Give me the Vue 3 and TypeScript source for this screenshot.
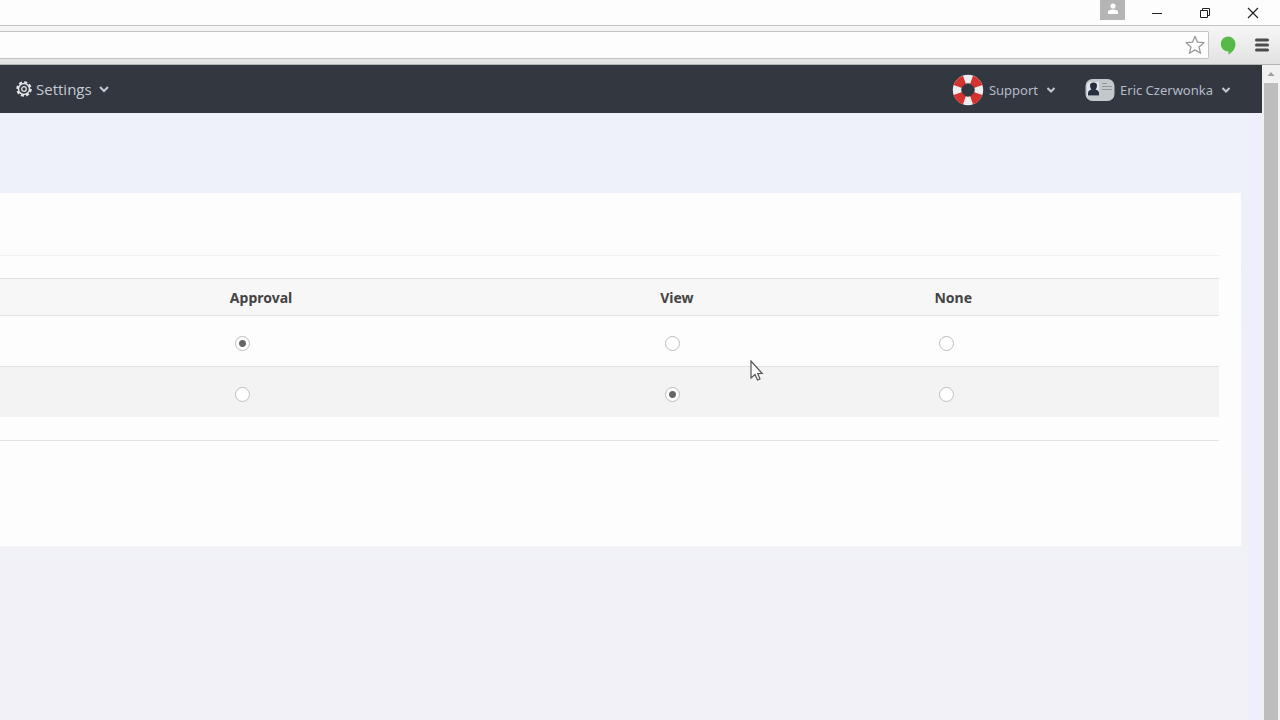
<script setup lang="ts">
import { ref } from 'vue'

interface PermissionRow {
  id: string
  label: string
}

const levels: string[] = ['Approval', 'View', 'None']
const rows: PermissionRow[] = [
  { id: 'row-1', label: 'First permission' },
  { id: 'row-2', label: 'Second permission' },
]
const chosen = ref<Record<string, string>>({ 'row-1': 'Approval', 'row-2': 'View' })
</script>

<template>
  <div class="window">
    <div class="titlebar">
      <button class="profile" type="button" aria-label="Profile">
        <svg width="12" height="12" viewBox="0 0 12 12" fill="#fff">
          <circle cx="6" cy="3" r="2.6" />
          <path d="M1 11V9Q1 6.800 6 6.500Q11 6.800 11 9V11Z" />
        </svg>
      </button>
      <div class="controls">
        <button type="button" aria-label="Minimize">
          <svg width="12" height="12" viewBox="0 0 12 12"><path d="M1 6.500H11" stroke="#222" /></svg>
        </button>
        <button type="button" aria-label="Restore">
          <svg width="12" height="12" viewBox="0 0 12 12" fill="none" stroke="#222">
            <path d="M1.500 3.500H8.500V10.500H1.500Z" />
            <path d="M3.500 3.500V1.500H10.500V8.500H8.500" />
          </svg>
        </button>
        <button type="button" aria-label="Close">
          <svg width="12" height="12" viewBox="0 0 12 12"><path d="M1 1L11 11M11 1L1 11" stroke="#222" stroke-width="1.200" /></svg>
        </button>
      </div>
    </div>

    <div class="toolbar">
      <div class="address">
        <input type="text" aria-label="Address" />
        <button type="button" aria-label="Bookmark">
          <svg width="20" height="20" viewBox="0 0 20 20">
            <path d="M10 1.300L12.500 7.200L18.900 7.700L14 11.900L15.600 18.300L10 14.900L4.400 18.300L6 11.900L1.100 7.700L7.500 7.200Z" fill="#fff" stroke="#999" stroke-width="1.300" stroke-linejoin="round" />
          </svg>
        </button>
      </div>
      <button type="button" class="tool" aria-label="Extension">
        <svg width="16" height="20" viewBox="0 0 16 20">
          <path d="M8 1.500A7.500 7.500 0 0 1 15.500 9C15.500 14 12 17.500 8.500 19.500V16.500A7.500 7.500 0 0 1 8 1.500Z" fill="#57b947" />
        </svg>
      </button>
      <button type="button" class="tool" aria-label="Menu">
        <svg width="14" height="14" viewBox="0 0 14 14"><path d="M1.500 2H12.500M1.500 7H12.500M1.500 12H12.500" stroke="#4c4c4c" stroke-width="3" stroke-linecap="round" /></svg>
      </button>
    </div>

    <div class="viewport">
      <div class="page">
        <nav class="nav">
          <button type="button" class="item settings">
            <svg width="16" height="16" viewBox="0 0 16 16" fill="none" stroke="#e3e5e8">
              <circle cx="8" cy="8" r="6.800" stroke-width="2" stroke-dasharray="3.100 2.240" />
              <circle cx="8" cy="8" r="5.500" stroke-width="1.500" />
              <circle cx="8" cy="8" r="2.300" stroke-width="1.300" />
            </svg>
            <span>Settings</span>
            <svg class="chevron" width="10" height="8" viewBox="0 0 10 8"><path d="M1 2L5 6L9 2" /></svg>
          </button>
          <button type="button" class="item support">
            <svg width="32" height="32" viewBox="0 0 32 32" fill="none" stroke-width="9">
              <circle cx="16" cy="16" r="10.700" stroke="#eceef0" />
              <circle cx="16" cy="16" r="10.700" stroke="#d5332f" pathLength="80" stroke-dasharray="11.500 8.500" stroke-dashoffset="-4.250" />
              <circle cx="16" cy="16" r="6.200" stroke="#2b3038" stroke-width="1" />
            </svg>
            <span>Support</span>
            <svg class="chevron" width="8" height="6" viewBox="0 0 8 6"><path d="M0.500 1L4 4.500L7.500 1" /></svg>
          </button>
          <button type="button" class="item user">
            <svg width="30" height="24" viewBox="0 0 30 24">
              <rect x="0.500" y="1" width="29" height="22" rx="7" fill="#c3c8cb" />
              <path d="M5 4H14V18H2V8Q2 4 5 4Z" fill="#dfe5ec" />
              <path d="M5 7.500Q5 4.500 8.500 4.500Q12 4.500 12 7.500Q12 10 10.500 11.500Q14 12.500 14 15V17.500H3V15Q3 12.500 6.500 11.500Q5 10 5 7.500Z" fill="#28303f" />
              <path d="M17 5.500H22M17 8.500H27M17 11.500H27" stroke="#90969a" />
            </svg>
            <span>Eric Czerwonka</span>
            <svg class="chevron" width="8" height="6" viewBox="0 0 8 6"><path d="M0.500 1L4 4.500L7.500 1" /></svg>
          </button>
        </nav>

        <main class="body">
          <section class="card">
            <hr class="rule light" />
            <table>
              <colgroup>
                <col class="c-name" />
                <col class="c-approval" />
                <col class="c-view" />
                <col />
              </colgroup>
              <thead>
                <tr>
                  <td></td>
                  <th v-for="level in levels" :key="level" scope="col">{{ level }}</th>
                </tr>
              </thead>
              <tbody>
                <tr v-for="row in rows" :key="row.id">
                  <td></td>
                  <td v-for="level in levels" :key="level">
                    <input
                      v-model="chosen[row.id]"
                      type="radio"
                      :name="row.id"
                      :value="level"
                      :aria-label="`${row.label}: ${level}`"
                    />
                  </td>
                </tr>
              </tbody>
            </table>
            <hr class="rule" />
          </section>
        </main>
      </div>

      <div class="scrollbar" aria-hidden="true">
        <svg width="8" height="6" viewBox="0 0 8 6"><path d="M0.500 5L4 1L7.500 5Z" fill="#a0a0a0" /></svg>
        <div class="thumb"></div>
      </div>
    </div>

    <svg class="cursor" width="14" height="22" viewBox="0 0 14 22">
      <path d="M1 1V18L5 14.500L7.500 20L10 19L7.700 13.500H12.200Z" fill="#fff" stroke="#555" stroke-width="1.200" />
    </svg>
  </div>
</template>

<style>
body {
  margin: 0;
}
</style>

<style scoped>
.window {
  position: relative;
  display: flex;
  flex-direction: column;
  min-height: 100vh;
  overflow: hidden;
  font-family: 'Noto Sans', 'Open Sans', sans-serif;
  font-size: 13px;
  color: #444;
}
button {
  display: flex;
  align-items: center;
  justify-content: center;
  padding: 0;
  border: 0;
  background: none;
  font: inherit;
  color: inherit;
}
svg {
  flex: none;
}
.titlebar {
  display: flex;
  justify-content: flex-end;
  gap: 8px;
  height: 25px;
  background: #fefdfe;
  border-bottom: 1px solid #c4c4c4;
}
.profile {
  width: 25px;
  height: 20px;
  padding-bottom: 2px;
  background: #b5b5b5;
}
.controls {
  display: flex;
  padding-right: 3px;
}
.controls button {
  width: 48px;
  height: 26px;
}
.toolbar {
  display: flex;
  align-items: center;
  gap: 11px;
  box-sizing: border-box;
  height: 39px;
  padding-right: 11px;
  background: linear-gradient(#f6f6f6, #e2e2e2);
  border-bottom: 1px solid #b4b4b4;
}
.address {
  display: flex;
  flex: 1;
  align-items: center;
  box-sizing: border-box;
  height: 28px;
  padding-right: 3px;
  background: #fefdfe;
  border: 1px solid #c3c3c3;
  border-left: 0;
  border-radius: 0 2px 2px 0;
}
.address input {
  flex: 1;
  min-width: 0;
  border: 0;
  outline: 0;
  background: transparent;
  font: inherit;
}
.tool:last-child {
  margin-left: 8px;
}
.viewport {
  display: flex;
  flex: 1;
}
.page {
  display: flex;
  flex: 1;
  flex-direction: column;
  min-width: 0;
}
.nav {
  display: flex;
  align-items: center;
  height: 48px;
  padding: 0 32px 0 16px;
  background: #323740;
  color: #b4bcc8;
}
.item span {
  margin: 0 9px 0 5px;
}
.item.settings span {
  margin: 0 7px 0 4px;
}
.settings {
  margin-right: auto;
  font-family: 'Open Sans', 'Noto Sans', sans-serif;
  font-size: 15px;
  color: #c5cbd3;
}
.support {
  margin-right: 30px;
}
.support,
.user {
  padding-top: 1px;
}
.chevron {
  fill: none;
  stroke: #c3c9d1;
  stroke-width: 2;
}
.body {
  flex: 1;
  padding: 80px 7px 0 0;
  background: linear-gradient(#eef0fa 0 80px, #f1f1f7 480px);
  border-right: 14px solid #eeeffa;
}
.card {
  padding: 62px 22px 105px 0;
  background: #fefdfe;
}
.rule {
  height: 1px;
  margin: 0;
  border: 0;
  background: #e2e2e2;
}
.rule.light {
  margin-bottom: 22px;
  background: #f0f0f0;
}
table {
  width: 100%;
  margin-bottom: 23px;
  border-collapse: separate;
  border-spacing: 0;
  table-layout: fixed;
}
.c-name {
  width: 18.2%;
}
.c-approval {
  width: 35.3%;
}
.c-view {
  width: 22.5%;
}
th,
td {
  padding: 0 8px;
  text-align: left;
}
th {
  font-size: 14px;
}
thead tr {
  height: 37px;
  background: #f7f7f7;
}
thead th,
thead td,
tbody td {
  border-top: 1px solid #e2e2e2;
}
tbody tr {
  height: 51px;
}
tbody tr:nth-child(even) {
  background: #f3f3f3;
}
td input {
  display: block;
  box-sizing: border-box;
  width: 15px;
  height: 15px;
  margin: 4px 5px 0;
  appearance: none;
  border: 1px solid #bdbdbd;
  border-radius: 50%;
  background: #fff;
}
td input:checked {
  background: radial-gradient(circle, #666 0 3px, #fff 4px);
}
.scrollbar {
  display: flex;
  flex-direction: column;
  align-items: center;
  box-sizing: border-box;
  width: 18px;
  padding-top: 6px;
  background: #f1f1f1;
}
.thumb {
  flex: 1;
  width: 14px;
  margin-top: 6px;
  background: #bdbdbd;
}
.cursor {
  position: absolute;
  top: 360px;
  left: 750px;
}
</style>
